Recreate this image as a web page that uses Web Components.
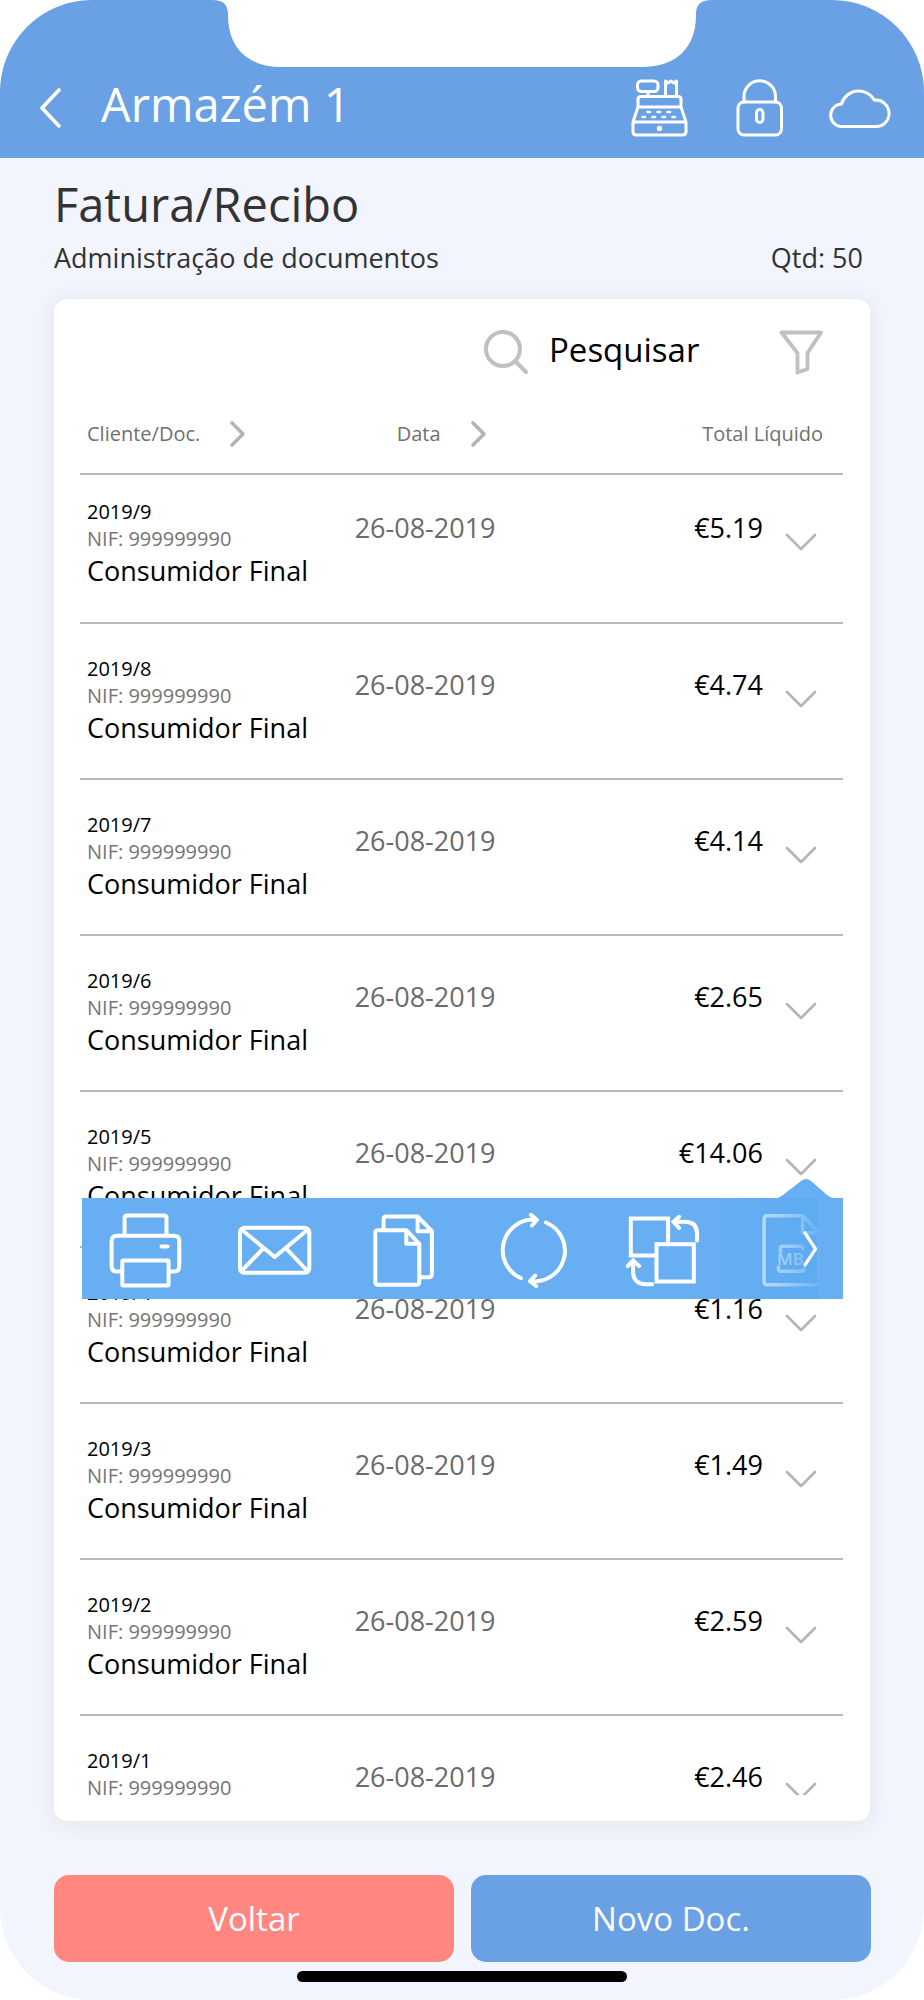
<!DOCTYPE html>
<html lang="pt">
<head>
<meta charset="utf-8">
<meta name="viewport" content="width=device-width, initial-scale=1">
<title>Fatura/Recibo</title>
<style>
  body { margin: 0; background: #fff; font-family: "Open Sans", "Noto Sans", sans-serif; color: #333; }
</style>
</head>
<body>
<phone-frame>
  <app-header slot="header" heading="Armazém 1"></app-header>
  <page-title heading="Fatura/Recibo" count="Qtd: 50">Administração de documentos</page-title>
  <doc-card>
    <search-bar slot="toolbar"></search-bar>
    <doc-table></doc-table>
  </doc-card>
  <action-bar slot="footer">
    <app-button kind="back">Voltar</app-button>
    <app-button kind="new">Novo Doc.</app-button>
  </action-bar>
</phone-frame>

<script>
const define = (name, html, setup) => customElements.define(name, class extends HTMLElement {
  connectedCallback() {
    if (this.shadowRoot) return;
    const template = document.createElement('template');
    template.innerHTML = html;
    this.attachShadow({ mode: 'open' }).append(template.content.cloneNode(true));
    if (setup) setup(this, this.shadowRoot);
  }
});

const reset = `
  *, *::before { box-sizing: border-box; }
  button { display: block; border: 0; padding: 0; margin: 0; background: none; font: inherit; color: inherit; cursor: pointer; }
  svg { display: block; overflow: visible; fill: none; stroke: currentColor; stroke-linecap: round; stroke-linejoin: round; }
`;

define('phone-frame', `
<style>
  ${reset}
  :host { display: flex; flex-direction: column; position: relative; height: 100vh; overflow: hidden;
          border-radius: 92px; background: #f2f5fd; }
  .notch { position: absolute; top: 0; left: 50%; margin-left: -250px; fill: #fff; stroke: none; }
  main { flex: 1; min-height: 0; display: flex; flex-direction: column; padding: 14px 54px 54px; }
  .home { width: 330px; height: 11px; margin: 9px auto 18px; border-radius: 6px; background: #000; flex: none; }
</style>
<slot name="header"></slot>
<svg class="notch" width="500" height="67" aria-hidden="true"><path d="M0 0C12 0 16 5 16 15C16 48 36 67 70 67H430C464 67 484 48 484 15C484 5 488 0 500 0Z"/></svg>
<main><slot></slot></main>
<slot name="footer"></slot>
<div class="home"></div>
`);

define('app-header', `
<style>
  ${reset}
  :host { display: block; background: #6aa1e5; color: #fff; }
  header { display: flex; align-items: center; height: 158px; padding: 58px 32px 0 38px; }
  h1 { flex: 1; margin: 0 0 8px 37px; font-size: 47px; line-height: 64px; font-weight: 400; }
  nav { display: flex; align-items: center; gap: 46px; }
  svg { stroke-width: 3; }
</style>
<header>
  <button aria-label="Voltar atrás"><svg width="26" height="44" viewBox="0 0 26 44" style="stroke-width:3.6"><path d="M21 4L4 22L21 40"/></svg></button>
  <h1></h1>
  <nav>
    <button aria-label="Caixa"><svg width="58" height="60" viewBox="0 0 58 60">
      <rect x="6.500" y="3" width="20.500" height="10.500" rx="4"/><path d="M17 14V18M34.500 18V3L37 5L40 3L43 5L45.500 3V18"/>
      <path d="M7 29V21.500Q7 18.500 10 18.500H47Q50 18.500 50 21.500V29ZM7 29L2 44M50 29L55 44M2 44H55V53.500Q55 57 51.500 57H5.500Q2 57 2 53.500Z"/>
      <path d="M16.500 34H19M26.500 34H29M36.500 34H39M11.500 39H14M21.500 39H24M31.500 39H34M41.500 39H44" stroke-width="2.600"/>
      <circle cx="28.500" cy="50.500" r="2" fill="currentColor" stroke-width="1.500"/></svg></button>
    <button aria-label="Bloquear"><svg width="47" height="60" viewBox="-1 0 47 60">
      <rect x="2" y="24" width="43.500" height="33" rx="6"/><path d="M8 24V18.500A15.700 15.700 0 0 1 39.500 18.500V24"/><rect x="20.500" y="31.500" width="6.500" height="13" rx="3.200"/></svg></button>
    <button aria-label="Nuvem"><svg width="64" height="44" viewBox="0 0 64 44">
      <path d="M12.500 40.500H49.200A13.200 13.200 0 1 0 46.500 14.200A18 18 0 0 0 13.500 18A11.300 11.300 0 0 0 12.500 40.500Z"/></svg></button>
  </nav>
</header>
`, (host, root) => { root.querySelector('h1').textContent = host.getAttribute('heading'); });

define('page-title', `
<style>
  :host { display: block; margin-bottom: 23px; }
  h2 { margin: 0 0 3px; font-size: 47px; line-height: 64px; font-weight: 400; }
  .sub { display: flex; justify-content: space-between; padding-right: 7px; font-size: 27px; line-height: 37px; }
</style>
<h2></h2>
<div class="sub"><span><slot></slot></span><span id="count"></span></div>
`, (host, root) => {
  root.querySelector('h2').textContent = host.getAttribute('heading');
  root.getElementById('count').textContent = host.getAttribute('count');
});

define('doc-card', `
<style>
  :host { flex: 1; min-height: 0; display: flex; flex-direction: column; box-sizing: border-box;
          padding: 26px 27px 26px 26px; border-radius: 13px; background: #fff; box-shadow: 0 2px 22px rgba(51, 40, 30, .09); }
  .list { flex: 1; min-height: 0; overflow-y: auto; scrollbar-width: none; }
</style>
<slot name="toolbar"></slot>
<div class="list"><slot></slot></div>
`);

define('search-bar', `
<style>
  ${reset}
  :host { display: flex; justify-content: flex-end; align-items: center; gap: 14px; margin-bottom: 25px; padding-right: 19px; color: #c0c0c0; }
  label { display: flex; align-items: center; gap: 20px; }
  input { width: 216px; height: 45px; padding: 0; border: 0; outline: 0; background: none; font: 33px/45px "Open Sans", "Noto Sans", sans-serif; color: #000; }
  input::placeholder { color: #000; opacity: 1; }
</style>
<label><svg width="46" height="45" viewBox="0 0 46 45" stroke-width="4" role="img" aria-label="Pesquisar"><circle cx="20" cy="22" r="17"/><path d="M32 34L43 45"/></svg>
  <input type="text" placeholder="Pesquisar"></label>
<button aria-label="Filtrar"><svg width="45" height="49" viewBox="0 0 45 49" stroke-width="3.800"><path d="M2.500 7.500H42L28.500 28V44L18.500 47.500V28Z"/></svg></button>
`);

define('doc-table', `
<style>
  ${reset}
  :host { display: block; }
  table { width: 100%; border-collapse: separate; border-spacing: 0; table-layout: fixed; }
  th, td { padding: 0; border-bottom: 2px solid #b8b8b8; text-align: left; vertical-align: top; font-weight: 400; }
  th { padding-top: 20px; height: 76px; font-size: 20px; line-height: 29px; color: #707070; }
  th button { display: flex; align-items: center; gap: 28px; height: 29px; }
  th svg { color: #b4b4b4; stroke-width: 3.6; }
  col.client { width: 36%; }
  col.date { width: 23%; }
  col.more { width: 80px; }
  .client { padding-left: 7px; }
  th.date { padding-left: 42px; }
  th.total { padding-right: 20px; text-align: right; }
  tr { position: relative; --top: 8px; }
  td { height: 156px; padding-top: calc(34px + var(--top)); font-size: 27px; line-height: 37px; }
  tbody tr:first-child { --top: 0px; }
  tbody tr:first-child td { height: 149px; }
  td.client { padding-top: calc(23px + var(--top)); color: #000; }
  td.date { color: #6b6b6b; }
  td.total { text-align: right; color: #000; }
  td.more { padding-top: calc(56px + var(--top)); padding-left: 20px; }
  td.more > button svg { color: #b4b4b4; stroke-width: 2.600; }
  .doc, .nif { display: block; font-size: 20px; line-height: 27px; }
  .nif { color: #757575; }
  action-menu { position: absolute; z-index: 1; top: 106px; left: 2px; right: 0; }
</style>
<table>
  <colgroup><col class="client"><col class="date"><col><col class="more"></colgroup>
  <thead><tr>
    <th class="client"><button>Cliente/Doc.<svg width="18" height="28" viewBox="0 0 18 28"><path d="M4 3L15 14L4 25"/></svg></button></th>
    <th class="date"><button>Data<svg width="18" height="28" viewBox="0 0 18 28"><path d="M4 3L15 14L4 25"/></svg></button></th>
    <th class="total" colspan="2">Total Líquido</th>
  </tr></thead>
  <tbody></tbody>
</table>
`, (host, root) => {
  const totals = ['5.19', '4.74', '4.14', '2.65', '14.06', '1.16', '1.49', '2.59', '2.46'];
  root.querySelector('tbody').innerHTML = totals.map((total, i) => `
    <tr><td class="client"><span class="doc">2019/${9 - i}</span><span class="nif">NIF: 999999990</span>Consumidor Final</td>
    <td class="date">26-08-2019</td><td class="total">€${total}</td>
    <td class="more"><button aria-label="Ações de 2019/${9 - i}"><svg width="36" height="22" viewBox="0 0 36 22"><path d="M4 4L18 18L32 4"/></svg></button>${i === 4 ? '<action-menu></action-menu>' : ''}</td></tr>`).join('');
});

define('action-menu', `
<style>
  ${reset}
  :host { display: block; height: 101px; background: #67aef2; color: #fff; }
  .tip { position: absolute; top: -20px; right: 7px; fill: #67aef2; stroke: none; }
  .items { display: flex; height: 100%; overflow: hidden; }
  .items button { flex: 0 0 17%; display: flex; align-items: center; justify-content: center; }
  .items svg { flex: none; width: 80px; height: 80px; stroke-width: 4; }
  .items .faint { opacity: .9; stroke-width: 3.400; }
  .fade { position: absolute; top: 0; bottom: 0; right: 24px; width: 104px; pointer-events: none;
          background: linear-gradient(to right, rgba(90, 170, 241, 0), rgba(90, 170, 241, .35) 42%, rgba(90, 170, 241, .6) 75%, rgba(92, 171, 241, .9)); }
  .rest { position: absolute; top: 0; bottom: 0; right: 0; width: 24px; background: #67aef2; }
  .next { position: absolute; top: 30px; right: 24px; }
  text { fill: currentColor; stroke: none; font: 600 17px "Open Sans", sans-serif; }
</style>
<svg class="tip" width="62" height="21" viewBox="0 0 62 21"><path d="M0 21Q5 20 9 17L27 3Q32 -1 37 3L53 17Q57 20 62 21Z"/></svg>
<div class="items">
  <button aria-label="Imprimir"><svg viewBox="0 0 80 80"><path d="M17.600 26V9Q17.600 6.500 20 6.500H57Q59.500 6.500 59.500 9V26M15.300 62.500H10Q4.600 62.500 4.600 57V32.500Q4.600 26.800 10 26.800H67Q72.300 26.800 72.300 32V57Q72.300 62.500 67 62.500H61.600"/><rect x="15.300" y="51.500" width="46.300" height="25" rx="1"/><path d="M54.500 37.500H60.500"/></svg></button>
  <button aria-label="Enviar por email"><svg viewBox="0 0 80 80"><rect x="4" y="18.800" width="69.300" height="45" rx="4.500"/><path d="M5.500 20.500L38.700 48L72 20.500M5.500 62L26.700 40M71.500 62L50.700 40"/></svg></button>
  <button aria-label="Duplicar"><svg viewBox="0 0 80 80"><path d="M13 21.200H41.300L54.300 34.800V73Q54.300 75.800 51.500 75.800H13Q10.300 75.800 10.300 73V24Q10.300 21.200 13 21.200ZM41.300 21.200V34.800H54.300M18.600 21V10.500Q18.600 7.500 21.500 7.500H52.600L66.900 22.200V65Q66.900 68.200 64 68.200H55M52.600 7.500V22.200H66.900"/></svg></button>
  <button aria-label="Atualizar"><svg viewBox="0 0 80 80"><path d="M25.900 69.200A30.600 30.600 0 0 1 41.500 10.800M35.900 5.800L42 10.800L37 16.500M50.900 13.500A30.600 30.600 0 0 1 35.500 72.200M40.200 66.500L35 72.200L41.200 77"/></svg></button>
  <button aria-label="Converter"><svg viewBox="0 0 80 80" style="stroke-linejoin:miter"><path d="M32.500 46.500H6.800V9.500H44.100V35.200"/><rect x="32.500" y="35.200" width="37.300" height="37.300"/><path d="M73.100 31.500V25Q73.100 12.800 61 12.800H49.500M55.100 7.800L49.500 12.800L55.100 19M28.100 75.200H22Q9.100 75.200 9.100 62V52M3.800 57L9.100 51.500L15.100 57"/></svg></button>
  <button aria-label="Multibanco"><svg class="faint" viewBox="0 0 80 80"><path d="M49.700 6.800H14Q11.100 6.800 11.100 10V72.500Q11.100 75.800 14 75.800H66V23.800L49.700 6.800V23.800H66M27.400 42V39.500Q27.400 37.200 29.500 37.200H48Q49.800 37.200 49.800 39.500M25.400 58V60Q25.400 62.200 27.500 62.200H49Q51 62.200 51 60"/><text x="24" y="56">MB</text></svg></button>
</div>
<div class="fade"></div><div class="rest"></div>
<button class="next" aria-label="Mais ações"><svg width="20" height="42" viewBox="0 0 20 42" stroke-width="3.200"><path d="M6 5L16.500 21L6 37"/></svg></button>
`);

define('action-bar', `
<style>
  :host { display: grid; grid-template-columns: 1fr 1fr; gap: 17px; padding: 0 53px 0 54px; }
</style>
<slot></slot>
`);

define('app-button', `
<style>
  ${reset}
  :host { display: block; }
  :host([kind="back"]) { --fill: #ff877f; }
  :host([kind="new"]) { --fill: #6aa1e5; }
  button { width: 100%; height: 87px; border-radius: 15px; background: var(--fill); color: #fff; font-size: 33px; line-height: 45px; }
</style>
<button><slot></slot></button>
`);
</script>
</body>
</html>
